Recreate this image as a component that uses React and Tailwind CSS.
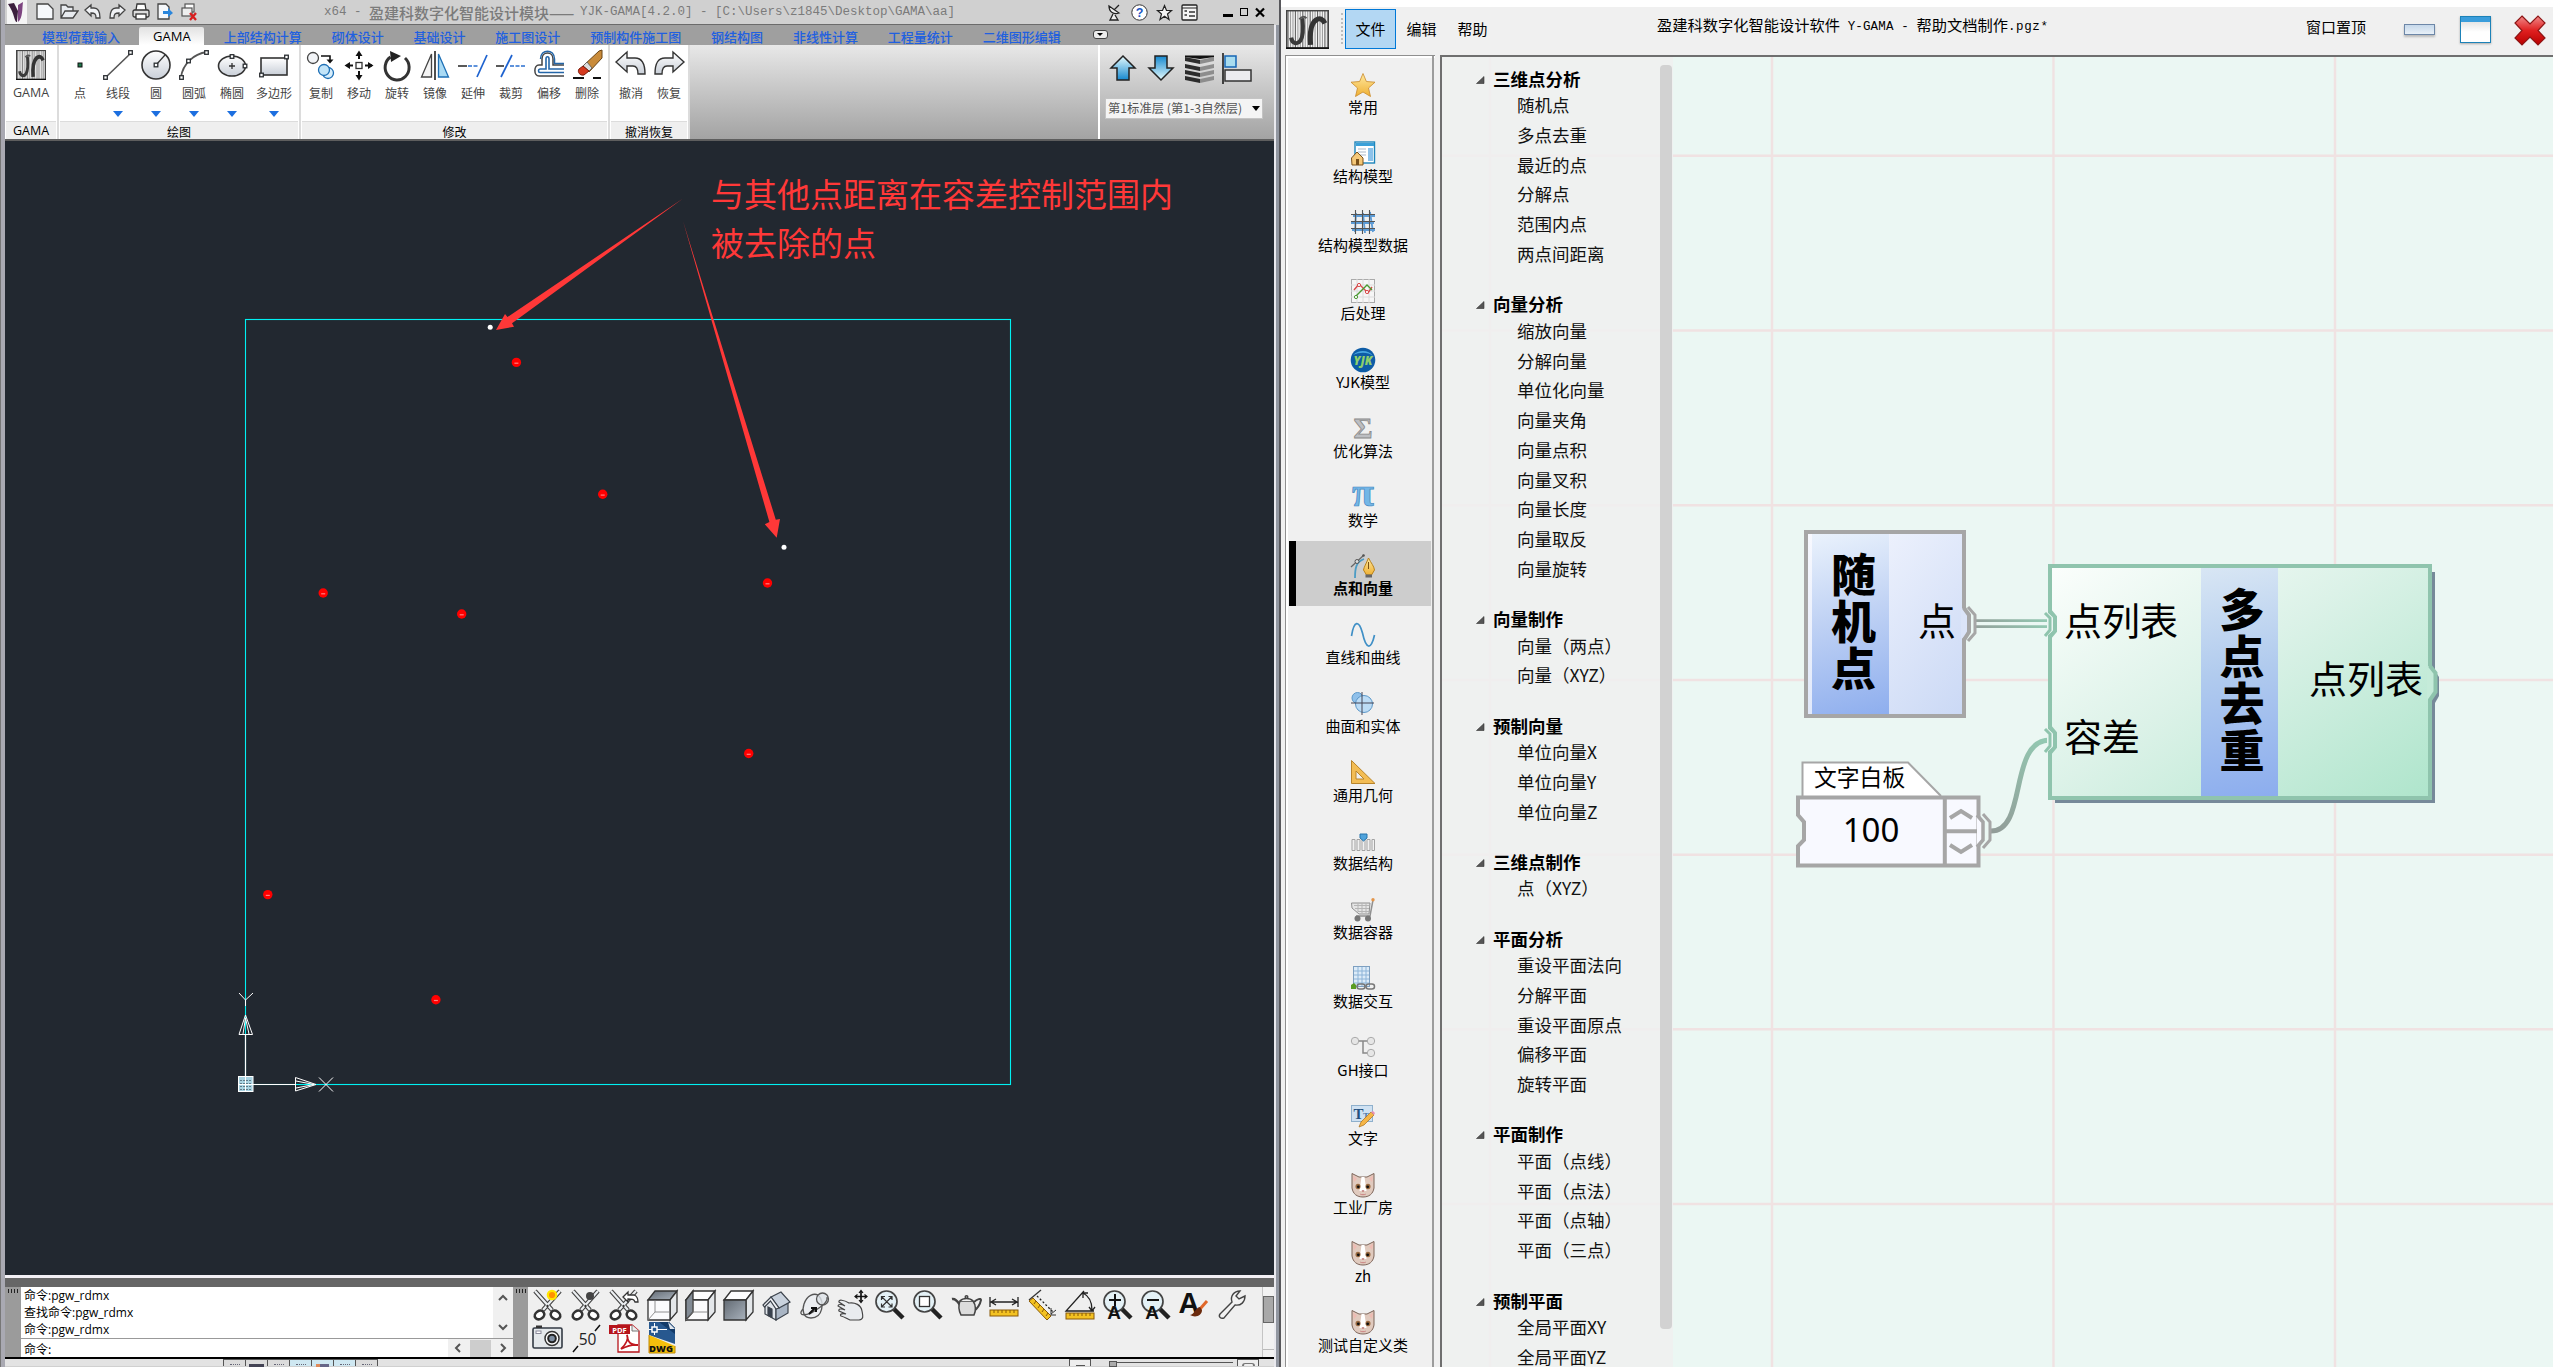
import React from "react";

const Svg = ({ w = 30, h = 30, vb = "0 0 30 30", className = "", children }) => (
  <svg width={w} height={h} viewBox={vb} fill="none" className={"block shrink-0 overflow-visible " + className}>
    {children}
  </svg>
);

const ink = "#2b2f33";

/* ---------- shared gradients ---------- */
const Defs = () => (
  <svg width="0" height="0" className="absolute">
    <defs>
      <linearGradient id="gSilver" x1="0" y1="0" x2="0" y2="1">
        <stop offset="0" stopColor="#ffffff" />
        <stop offset="1" stopColor="#c9cfd8" />
      </linearGradient>
      <linearGradient id="gBlueUp" x1="0" y1="0" x2="0" y2="1">
        <stop offset="0" stopColor="#e6fbfd" />
        <stop offset="1" stopColor="#1488cf" />
      </linearGradient>
      <linearGradient id="gBlueDown" x1="0" y1="0" x2="0" y2="1">
        <stop offset="0" stopColor="#1488cf" />
        <stop offset="1" stopColor="#e6fbfd" />
      </linearGradient>
      <linearGradient id="gGold" x1="0" y1="0" x2="0" y2="1">
        <stop offset="0" stopColor="#ffe9a0" />
        <stop offset="1" stopColor="#efb033" />
      </linearGradient>
      <linearGradient id="gRed" x1="0" y1="0" x2="0" y2="1">
        <stop offset="0" stopColor="#f08a8a" />
        <stop offset="0.5" stopColor="#e02020" />
        <stop offset="1" stopColor="#b80000" />
      </linearGradient>
      <linearGradient id="gSteel" x1="0" y1="0" x2="1" y2="1">
        <stop offset="0" stopColor="#636b74" />
        <stop offset="1" stopColor="#a9b2bc" />
      </linearGradient>
    </defs>
  </svg>
);

const Logo = ({ w = 30, h = 30 }) => (
  <svg width={w} height={h} viewBox="0 0 42 38" preserveAspectRatio="none" className="block">
    <rect width="42" height="38" fill="#f4f4f4" />
    {Array.from({ length: 17 }, (_, i) => (
      <line key={i} x1={2 + i * 2.4} x2={2 + i * 2.4} y1="1" y2="37" stroke={i % 3 ? "#a0a0a0" : "#666"} strokeWidth="1.1" />
    ))}
    <path d="M16 8C17 18 17 26 14 30C11 34 6 33 5 27" stroke="#3a3a3a" strokeWidth="4" fill="none" />
    <path d="M24 34C23 22 24 14 29 10C33 7 36 9 38 13" stroke="#333" strokeWidth="5" fill="none" />
    <path d="M13 9C16 6 18 6 20 8" stroke="#555" strokeWidth="2" fill="none" />
    <rect x="0.7" y="0.7" width="40.6" height="36.6" stroke="#444" strokeWidth="1.4" fill="none" />
    <path d="M0 37.2H42" stroke="#111" strokeWidth="1.6" />
  </svg>
);

/* ---------- ribbon icons ---------- */
const sq = (x, y) => <rect x={x - 1.8} y={y - 1.8} width="3.6" height="3.6" fill="#fff" stroke={ink} strokeWidth="1.3" />;

const ribbonIcons = {
  点: <rect x="13" y="13" width="4" height="4" fill="#1f7a4c" stroke="#111" />,
  线段: (<><path d="M2 28L28 3" stroke="#555" strokeWidth="1.6" />{sq(2.5, 27.5)}{sq(27.5, 2.5)}</>),
  圆: (<><circle cx="15" cy="15" r="14" fill="url(#gSilver)" stroke="#333" strokeWidth="1.6" /><path d="M15 15L24 5" stroke="#333" strokeWidth="1.2" />{sq(15, 15)}</>),
  圆弧: (<><path d="M2 27C4 14 14 4 28 2" stroke="#555" strokeWidth="1.8" />{sq(2.5, 27.5)}{sq(9.5, 11)}{sq(27.5, 2.5)}</>),
  椭圆: (<><ellipse cx="15" cy="16" rx="13.5" ry="10" fill="url(#gSilver)" stroke="#333" strokeWidth="1.6" /><path d="M15 13V19M12 16H18" stroke="#333" strokeWidth="1.3" />{sq(15, 6.5)}{sq(28, 16)}</>),
  多边形: (<><rect x="2" y="8" width="26" height="17" fill="url(#gSilver)" stroke="#333" strokeWidth="1.6" />{sq(2.5, 25)}{sq(27.5, 7)}</>),
  复制: (<><circle cx="7" cy="8" r="5.5" fill="#f2f4f7" stroke="#444" strokeWidth="1.3" /><path d="M15 6H24V11" stroke="#111" strokeWidth="1.6" /><path d="M20.5 9.5H27.5L24 13.5Z" fill="#111" /><circle cx="22" cy="23" r="5.5" fill="#d8eefb" stroke="#1d6fb5" strokeWidth="1.3" /><circle cx="18" cy="20" r="5.5" fill="#c2e4f8" stroke="#1d6fb5" strokeWidth="1.3" /></>),
  移动: (<><rect x="12" y="12.5" width="6" height="6" fill="#fff" stroke="#333" strokeWidth="1.3" /><path d="M15 3V9M15 21V28M3 15.5H9M21 15.5H28" stroke="#111" strokeWidth="2" /><path d="M11.5 6L15 0.500L18.500 6ZM11.500 25L15 30.500L18.500 25ZM6 12L0.500 15.500L6 19ZM24 12L29.500 15.500L24 19Z" fill="#111" /></>),
  旋转: (<><path d="M8.500 7A12 12.500 0 1 0 23 8" stroke="#333" strokeWidth="3" /><path d="M8 1L19 6L9 12Z" fill="#222" /></>),
  镜像: (<><path d="M15 1V30" stroke="#222" strokeWidth="1.6" /><path d="M11.500 4V27H1.500Z" fill="#f4f4f4" stroke="#444" strokeWidth="1.300" /><path d="M18.500 4V27H28.500Z" fill="#a9daf4" stroke="#1d6fb5" strokeWidth="1.300" /></>),
  延伸: (<><path d="M0 16H9" stroke="#222" strokeWidth="1.500" /><path d="M10 16H21" stroke="#2a6fd0" strokeWidth="1.500" strokeDasharray="4 1.500" /><path d="M29 5L19 27" stroke="#1d62cf" strokeWidth="1.700" /></>),
  裁剪: (<><path d="M0 16H8" stroke="#222" strokeWidth="1.500" /><path d="M14 16H30" stroke="#2a6fd0" strokeWidth="1.500" strokeDasharray="4 1.500" /><path d="M16 5L5 27" stroke="#1d62cf" strokeWidth="1.700" /></>),
  偏移: (<><path d="M30 15H19V9C19 1 8 1 8 9V15H5C-0.500 15 -0.500 26 5 26H30" stroke="#444" strokeWidth="1.500" /><path d="M30 13.500H20.500V9C20.500 -1.500 6.500 -1.500 6.500 9" stroke="#2466a8" strokeWidth="1.500" /><path d="M30 19H15V9C15 6 12 6 12 9V19H6C4 19 4 22.500 6 22.500H30" stroke="#2466a8" strokeWidth="1.600" /></>),
  删除: (<><path d="M1 28H12M21 28H29" stroke="#111" strokeWidth="2" /><path d="M30 0V8L17 22L11 16L27 1Z" fill="#c98b3a" stroke="#6a4415" /><path d="M15 12L20 18L17 21L11 16Z" fill="#ddd" stroke="#555" strokeWidth=".8" /><path d="M11 16L17 21L12 25C8 26 5 22 7 19Z" fill="#d63a1f" stroke="#7b1c0c" /></>),
  撤消: <path d="M0 12L11 2V8H19C26 8 29 13 29 24H22C22 18 20 16 17 16H11V22Z" fill="url(#gSilver)" stroke="#333" strokeWidth="1.400" />,
  恢复: <path d="M30 12L19 2V8H11C4 8 1 13 1 24H8C8 18 10 16 13 16H19V22Z" fill="url(#gSilver)" stroke="#333" strokeWidth="1.400" />,
};

const Tool = ({ name, w = "w-[38px]", menu }) => (
  <div className={"flex h-[76px] flex-col items-center pt-[4px] " + w}>
    <Svg className="translate-y-px">{ribbonIcons[name]}</Svg>
    <span className="mt-[4px] h-[18px] whitespace-nowrap text-[12px] leading-[19px] text-[#444]">{name}</span>
    {menu && <span className="mt-[10px] h-0 w-0 border-x-[5px] border-t-[6px] border-x-transparent border-t-[#1c6fe0]" />}
  </div>
);

const Group = ({ label, className, children }) => (
  <div className={"flex flex-col border-r-2 border-[#dcdcdc] bg-white " + className}>
    <div className="flex h-[76px]">{children}</div>
    <div className="mx-[1px] flex h-[18px] items-center justify-center border-t border-[#dcdcdc] bg-[#efefef] pt-[2px] text-[12px] leading-none text-black">{label}</div>
  </div>
);

const Mono = ({ children }) => <span className="whitespace-pre font-['Liberation_Mono',monospace] text-[12.5px]">{children}</span>;

const QuickIcons = () => (
  <div className="flex items-center pl-[2px]">
    <svg width="20" height="24" viewBox="0 0 20 24" className="mr-[8px]">
      <rect width="20" height="24" fill="#f5f5f5" />
      <path d="M1 4L7 3L11 11L10 22C7 22 8 14 1 4Z" fill="#3b1f3d" />
      <path d="M11 5L16 2C15 8 16 18 11 22Z" fill="#7d4480" />
    </svg>
    {[
      <path key="a" d="M2 2H13L18 7V17H2Z" fill="#f6f8fb" stroke="#444" strokeWidth="1.300" />,
      <path key="b" d="M2 16V3H7L9 5H14V9H19L14 16ZM2 16L6 9H14" fill="#e8ebef" stroke="#444" strokeWidth="1.300" />,
      <path key="c" d="M2 8L8 3V6H11C15 6 17 9 17 16H13C13 12 12 11 8 11V14Z" fill="#f0f2f5" stroke="#444" strokeWidth="1.300" />,
      <path key="d" d="M18 8L12 3V6H9C5 6 3 9 3 16H7C7 12 8 11 12 11V14Z" fill="#f0f2f5" stroke="#444" strokeWidth="1.300" />,
      <g key="e" stroke="#333" strokeWidth="1.300"><path d="M5 8L6 2H14L15 8" fill="#fff" /><rect x="2" y="8" width="16" height="7" rx="1.500" fill="#ddd" /><rect x="5" y="12" width="10" height="5" fill="#fff" /></g>,
      <g key="f"><path d="M3 2H11L14 5V17H3Z" fill="#f6f8fb" stroke="#444" strokeWidth="1.300" /><path d="M8 9H13V6L18 11L13 15V12H8Z" fill="#2a86dc" /></g>,
      <g key="g" stroke="#555" strokeWidth="1.200"><rect x="6" y="2" width="9" height="8" fill="#fff" /><rect x="3" y="6" width="10" height="8" fill="#eee" /><path d="M11 11L17 18M17 11L11 18" stroke="#d81e1e" strokeWidth="2.300" /></g>,
    ].map((g, i) => (
      <svg key={i} width="20" height="20" viewBox="0 0 20 20" fill="none" className="mr-[4px]">{g}</svg>
    ))}
  </div>
);

const TitleBar = () => (
  <div className="flex h-[25px] items-center border-b border-[#6b6b6b] bg-[#d0d0d0]">
    <div className="w-[319px]"><QuickIcons /></div>
    <div className="flex w-[783px] items-center whitespace-nowrap text-[15px] font-medium leading-none text-[#7b7b7b]">
      <Mono>{"x64 - "}</Mono>盈建科数字化智能设计模块
      <span className="inline-block w-[31px] tracking-[1px]" lang="zh-CN">——</span>
      <Mono>{"YJK-GAMA[4.2.0] - [C:\\Users\\z1845\\Desktop\\GAMA\\aa]"}</Mono>
    </div>
    <div className="flex items-center gap-[8px]">
      <Svg w={16} h={18} vb="0 0 16 18"><path d="M2 3C2 9 7 12 12 10ZM7 7L12 2M6 11L3 17H11L8 12" fill="#eee" stroke="#222" strokeWidth="1.300" /></Svg>
      <Svg w={17} h={17} vb="0 0 17 17"><circle cx="8.500" cy="8.500" r="7.700" fill="#fff" stroke="#333" /><text x="8.500" y="13" textAnchor="middle" fontSize="12.500" fontWeight="700" fill="#1b55c4" fontFamily="Liberation Sans">?</text></Svg>
      <Svg w={17} h={17} vb="0 0 17 17"><path d="M8.500 1.500L10.500 6.500H15.500L11.500 10L13 15.500L8.500 12.300L4 15.500L5.500 10L1.500 6.500H6.500Z" fill="#f4f4f4" stroke="#222" strokeWidth="1.200" /></Svg>
      <Svg w={17} h={17} vb="0 0 17 17"><rect x="1" y="1" width="15" height="15" rx="1" fill="#f4f4f4" stroke="#222" strokeWidth="1.300" /><path d="M1 4H16" stroke="#222" /><path d="M3.500 7H6M3.500 11H6M8 8H14M8 12H14" stroke="#333" strokeWidth="1.300" /></Svg>
    </div>
    <div className="ml-[25px] flex items-center gap-[7px]">
      <span className="mt-[6px] h-[3px] w-[10px] bg-black" />
      <span className="h-[8px] w-[8px] border-[1.5px] border-black" />
      <Svg w={10} h={9} vb="0 0 10 9"><path d="M1 0.500L9 8.500M9 0.500L1 8.500" stroke="#000" strokeWidth="2.200" /></Svg>
    </div>
  </div>
);

const Tab = ({ children }) => (
  <div className="translate-y-px whitespace-nowrap px-[14.93px] text-[13px] font-medium leading-[19px] text-[#2160e0]">{children}</div>
);

const TabBar = () => (
  <div className="flex h-[20px] items-end bg-[#9f9f9f] pl-[22px]">
    <Tab>模型荷载输入</Tab>
    <div className="mx-[4.500px] h-[18px] w-[65px] rounded-t-[2px] bg-gradient-to-b from-[#e2e2e2] to-white text-center font-['Open_Sans'] text-[13px] leading-[18px] text-black">GAMA</div>
    {["上部结构计算", "砌体设计", "基础设计", "施工图设计", "预制构件施工图", "钢结构图", "非线性计算", "工程量统计", "二维图形编辑"].map((t) => <Tab key={t}>{t}</Tab>)}
    <div className="mb-[6px] ml-[17px] flex h-[9px] w-[15px] items-center justify-center rounded-[3px] border border-[#444] bg-[#eee]">
      <span className="h-0 w-0 border-x-[3px] border-t-[3px] border-x-transparent border-t-black" />
    </div>
  </div>
);

const Ribbon = () => (
  <div className="flex h-[94px] bg-[#e6e6e6]">
    <Group label={<span className="font-['Open_Sans'] text-[12.500px]">GAMA</span>} className="w-[54px]">
      <div className="flex w-full flex-col items-center pt-[5px]">
        <Logo w={30} h={30} />
        <span className="mt-[3px] font-['Open_Sans'] text-[12.500px] leading-[19px] text-[#444]">GAMA</span>
      </div>
    </Group>
    <Group label="绘图" className="w-[242px] [&>div:first-child]:pl-[2px]">
      <Tool name="点" />
      <Tool name="线段" menu />
      <Tool name="圆" menu />
      <Tool name="圆弧" menu />
      <Tool name="椭圆" menu />
      <Tool name="多边形" menu w="w-[46px]" />
    </Group>
    <Group label="修改" className="w-[309px] [&>div:first-child]:pl-[1px]">
      {["复制", "移动", "旋转", "镜像", "延伸", "裁剪", "偏移", "删除"].map((n) => <Tool key={n} name={n} />)}
    </Group>
    <Group label="撤消恢复" className="w-[80px] [&>div:first-child]:pl-[2px]">
      <Tool name="撤消" />
      <Tool name="恢复" />
    </Group>
    <div className="flex-1 bg-gradient-to-b from-[#e8e8e8] to-[#a3a3a3]" />
    <div className="w-[176px] border-l-2 border-white bg-gradient-to-b from-[#e8e8e8] to-[#a3a3a3] pl-[5px]">
      <div className="flex h-[53px] items-start pl-[5px] pt-[10px]">
        <Svg w={26} h={26} vb="0 0 26 26" className="mr-[12px]"><path d="M13 1L25 13H19V25H7V13H1Z" fill="url(#gBlueUp)" stroke="#222" strokeWidth="1.500" /></Svg>
        <Svg w={26} h={26} vb="0 0 26 26" className="mr-[10px]"><path d="M13 25L1 13H7V1H19V13H25Z" fill="url(#gBlueDown)" stroke="#222" strokeWidth="1.500" /></Svg>
        <Svg w={31} h={28} vb="0 0 31 28" className="mr-[7px]">
          {[2, 9, 15, 21].map((y) => (<g key={y}><path d={`M1 ${y}L16 ${y + 3}V${y + 7}L1 ${y + 4}Z`} fill="#2c2c2c" /><path d={`M30 ${y}L16 ${y + 3}V${y + 7}L30 ${y + 4}Z`} fill="#8d8d8d" /></g>))}
          <path d="M1 0.500H30V2L16 4L1 2Z" fill="#111" />
        </Svg>
        <Svg w={31} h={31} vb="0 0 31 31" className="-mt-[2px]"><path d="M1 0V31" stroke="#111" strokeWidth="1.500" /><rect x="3" y="3" width="11" height="11" fill="#a9dcef" stroke="#1666b5" strokeWidth="1.500" /><rect x="3" y="17" width="26" height="11" fill="#ececf0" stroke="#333" strokeWidth="1.500" /></Svg>
      </div>
      <div className="flex h-[21px] w-[158px] items-center justify-between border border-[#c4c4c4] bg-[#f4f4f4] pl-[2px] pr-[1px] text-[12.300px] leading-none text-[#555]">
        <span className="whitespace-nowrap">第1标准层 (第1-3自然层)</span>
        <span className="mr-[1px] h-0 w-0 border-x-[4px] border-t-[5px] border-x-transparent border-t-black" />
      </div>
    </div>
  </div>
);

/* ---------- model space ---------- */
const redPoints = [[516.4, 362.4], [602.7, 494.3], [767.500, 583], [461.700, 614], [323.200, 593], [748.700, 753.500], [267.800, 894.600], [435.900, 999.700]];

const ModelSpace = () => (
  <div className="relative h-[1134px] bg-[#222830]">
    <svg width="1269" height="1134" viewBox="5 141 1269 1134" className="block">
      <rect x="245.500" y="319.500" width="765" height="765" fill="none" stroke="#00f0f2" strokeWidth="1.100" />
      <g stroke="#fff" fill="none">
        <path d="M245.500 1006V1000M239 993L245.500 1000L253 993" />
        <path d="M245.500 1035V1084.500H296" strokeWidth="1.200" />
        <path d="M245.500 1015L239 1034.500H252.500ZM243 1034L245.500 1018L249 1034" />
        <path d="M316 1084.500L295.500 1077.500V1091ZM296 1081L314 1084.500L296 1088" />
        <path d="M319 1077.500L333 1091.500M333 1077.500L319 1091.500" />
        <rect x="238.500" y="1076.500" width="14.500" height="15" fill="#a9d3e2" />
      </g>
      {[0, 1, 2, 3].map((r) => [0, 1, 2, 3].map((c) => <rect key={r + "-" + c} x={240.500 + c * 3} y={1080 + r * 3} width="1" height="1" fill="#123" />))}
      <path d="M238 1084.500H253M245.500 1077V1092" stroke="#fff" />
      {redPoints.map(([x, y]) => (
        <g key={x}><circle cx={x} cy={y} r="4.700" fill="#ff0000" /><path d={`M${x - 2} ${y + 0.800}h4`} stroke="#ff8080" strokeWidth="1.200" /></g>
      ))}
      <circle cx="490.200" cy="327.300" r="2.500" fill="#fff" />
      <circle cx="784" cy="547.300" r="2.500" fill="#fff" />
      <path d="M683 198.500L507.500 317L505 314L496 330L514 326.700L512 323.200Z" fill="#ff3838" />
      <path d="M683 221L769.400 522L764.800 524.300L776.700 537.700L780 519L775.800 519.700Z" fill="#ff3838" />
    </svg>
    <div className="absolute left-[706px] top-[27.500px] whitespace-nowrap text-[33px] leading-[49px] text-[#ff3838]">
      与其他点距离在容差控制范围内<br />被去除的点
    </div>
  </div>
);

/* ---------- bottom docks ---------- */
const Scissors = ({ children }) => (
  <><path d="M2 1L19 20M27 1L10 20" stroke="#444" strokeWidth="4.400" /><path d="M2 1L19 20M27 1L10 20" stroke="#eceff2" strokeWidth="2.200" /><ellipse cx="6.500" cy="25" rx="5" ry="4" stroke="#333" strokeWidth="2.600" fill="#fff" transform="rotate(-35 6.500 25)" /><ellipse cx="22.500" cy="25" rx="5" ry="4" stroke="#333" strokeWidth="2.600" fill="#fff" transform="rotate(35 22.500 25)" /><circle cx="14.500" cy="16" r="1.200" fill="#333" />{children}</>
);
const Cube = ({ face }) => (
  <g stroke="#333" strokeWidth="1.300">
    <path d="M1 10L8 1H30L23 10Z" fill={face === "top" ? "url(#gSteel)" : "#fdfdfe"} />
    <path d="M23 10L30 1V22L23 30Z" fill="#e4e7ea" />
    <path d="M1 10H23V30H1Z" fill={face === "front" ? "url(#gSteel)" : "#fbfbfc"} />
    {face === "left" && <path d="M1 10L8 1V22L1 30Z" fill="#828b95" />}
    {face !== "front" && <path d="M8 10V22H23M8 22L1 30" strokeWidth=".8" stroke="#777" />}
  </g>
);
const Lens = ({ children }) => (
  <><path d="M18 18L28 28" stroke="#222" strokeWidth="4.500" /><circle cx="11.500" cy="11.500" r="10.500" fill="#e4f1f6" stroke="#444" strokeWidth="1.700" />{children}</>
);
const Ruler = ({ y = 20 }) => (<><rect x="1" y={y} width="28" height="6" fill="#f3c222" stroke="#8a5b08" /><path d={`M5 ${y}v3M9 ${y}v3M13 ${y}v3M17 ${y}v3M21 ${y}v3M25 ${y}v3`} stroke="#8a5b08" /></>);

const viewIcons = [
  <Scissors><circle cx="19" cy="5" r="4.200" fill="#ff9100" stroke="#ffe600" strokeWidth="2.200" /></Scissors>,
  <Scissors><circle cx="19" cy="6" r="4" fill="#444" /></Scissors>,
  <Scissors><path d="M14 7L19 2V5H25C28 6 29 8 29 12H26C25 9 23 9 19 9V12Z" fill="#fff" stroke="#333" strokeWidth="1.300" /></Scissors>,
  <Cube face="top" />, <Cube face="left" />, <Cube face="front" />,
  <g stroke="#3c434c" strokeWidth="1.200"><path d="M4 13V24L15 30V18L10 10Z" fill="#dfe4ea" /><path d="M15 18V30L27 23V13Z" fill="#a9b5c4" /><path d="M10 7L20 2L29 12L18 18Z" fill="#c9d2dd" /><path d="M2 15L10 7L18 18L15 19L9.500 11L3.500 17Z" fill="#f2f4f7" /><path d="M7 17L11 19V27.500L7 25.500Z" fill="#39424f" /></g>,
  <g stroke="#555" strokeWidth="1.300"><path d="M12 28C4 28 3 20 5 14C8 5 15 3 19 5C26 12 24 28 12 28Z" fill="#eceef1" /><circle cx="23.500" cy="9" r="6" fill="#dfe3e8" fillOpacity=".8" /><path d="M4 19C-3 27 9 26 17 20C25 15 29 10 28 7" /><path d="M10 24L16 18M12 18H17V22" stroke="#111" strokeWidth="2" /></g>,
  <g stroke="#444" strokeWidth="1.200"><path d="M2 12C1 9 7 10 12 13C18 12 24 15 25 21C26 26 27 29 22 30H13C10 29 8 27 4 26C2 24 6 23 9 24L2 21C1 19 4 18 8 20L1 16C1 14 4 14 8 16Z" fill="#e9ecef" /><path d="M24 1V12M18.500 6.500H29.500" stroke="#111" strokeWidth="1.700" /><path d="M22 3L24 0.500L26 3M22 10L24 12.500L26 10M20.500 4.500L18 6.500L20.500 8.500M27.500 4.500L30 6.500L27.500 8.500" stroke="#111" /></g>,
  <Lens><path d="M7 7L16.500 16.500M16.500 7L7 16.500M6.500 10V6.500H10M13.500 6.500H17V10M17 13.500V17H13.500M10 17H6.500V13.500" stroke="#333" strokeWidth="1.200" /></Lens>,
  <Lens><rect x="6.500" y="6.500" width="10" height="10" fill="#fff" stroke="#333" strokeWidth="1.300" /></Lens>,
  <g stroke="#444" strokeWidth="1.500"><path d="M23 12C26 9 30 8 30 10C29 15 26 19 22 22" strokeWidth="2" /><path d="M1 9C5 8 7 12 9 15L10 21" strokeWidth="2.500" /><path d="M9 11C7 16 8 21 10 25H23C25 21 25 15 22 11Z" fill="#dcdcdc" /><path d="M9 11C12 7.500 19 7.500 22 11" fill="#f2f2f2" /><circle cx="15.500" cy="7" r="1.300" /></g>,
  <><path d="M1 7V17M29 7V17M3 12H27M7 9L2 12L7 15M23 9L28 12L23 15" stroke="#222" strokeWidth="1.300" /><Ruler y={20} /></>,
  <><path d="M2 10L14 0" stroke="#333" strokeWidth="1.300" /><path d="M10 6L26 22" stroke="#222" strokeWidth="1.300" strokeDasharray="2 2" /><path d="M24 24L29 20M24 18V25H29" stroke="#333" /><path d="M2 11L6 8L24 26L20 30Z" fill="#f3c222" stroke="#8a5b08" /><path d="M9 11l-2 3M13 15l-2 3M17 19l-2 3M21 23l-2 3" stroke="#8a5b08" /></>,
  <><path d="M19 1L1 21H29M18 3C24 6 27 13 27 20M18 8V3H23M24 17L27 21L30 17" stroke="#222" strokeWidth="1.300" /><Ruler y={23} /></>,
  <Lens><path d="M6 10H18M12 4V16" stroke="#111" strokeWidth="2" /><text x="11" y="29" textAnchor="middle" fontSize="19" fontWeight="700" fill="#111" fontFamily="Liberation Sans">A</text></Lens>,
  <Lens><path d="M6 10H18" stroke="#111" strokeWidth="2" /><text x="11" y="29" textAnchor="middle" fontSize="19" fontWeight="700" fill="#111" fontFamily="Liberation Sans">A</text></Lens>,
  <><text x="10" y="22.500" textAnchor="middle" fontSize="29" fontWeight="700" fill="#111" fontFamily="Liberation Sans">A</text><path d="M28 11L21 19" stroke="#e0672a" strokeWidth="3" /><path d="M21 17C16 18 16 24 11 25C16 28 23 26 23 20Z" fill="#6b2a0d" /></>,
  <path d="M3 24L15 12C13 6 17 1 23 1L19 6L22 9L28 6C28 12 24 16 18 15L7 28C4 29 1 27 3 24Z" fill="#f2f2f2" stroke="#444" strokeWidth="1.400" />,
];

const Grip = ({ className }) => (
  <div className={"bg-[#9b9b9b] pt-[2px] " + className}>
    <div className="mx-auto h-[4px] w-[12px] bg-[radial-gradient(#222_0.8px,transparent_0.9px)] [background-size:3px_2px]" />
  </div>
);

const Chev = ({ d }) => <svg width="10" height="10" viewBox="0 0 10 10" fill="none"><path d={d} stroke="#555" strokeWidth="2" /></svg>;

const BottomDock = () => (
  <div className="flex h-[70px]">
    <Grip className="w-[16px]" />
    <div className="flex w-[492px] flex-col bg-white text-black">
      <div className="flex h-[52px] border-b border-[#999]">
        <div className="flex-1 pl-[3px] font-['Open_Sans','Noto_Sans_CJK_SC',sans-serif] text-[12px] leading-[17px]">
          <p>命令:pgw_rdmx</p><p>查找命令:pgw_rdmx</p><p>命令:pgw_rdmx</p>
        </div>
        <div className="flex w-[20px] flex-col items-center justify-between bg-[#f0f0f0] py-[6px]">
          <Chev d="M1 7L5 3L9 7" /><Chev d="M1 3L5 7L9 3" />
        </div>
      </div>
      <div className="flex h-[18px] items-center">
        <div className="flex-1 pl-[3px] text-[12px] leading-[17px]">命令:</div>
        <div className="flex h-full w-[65px] items-center justify-between bg-[#f0f0f0] px-[5px]">
          <Chev d="M7 1L3 5L7 9" /><span className="h-[17px] w-[21px] bg-[#cdcdcd]" /><Chev d="M3 1L7 5L3 9" />
        </div>
      </div>
    </div>
    <Grip className="w-[15px]" />
    <div className="flex flex-1 flex-col bg-[#efefef] pl-[5px]">
      <div className="flex gap-[8px] pt-[3px]">
        {viewIcons.map((g, i) => <Svg key={i} h={31} vb="0 0 30 31">{g}</Svg>)}
      </div>
      <div className="flex gap-[8px] pt-[4px]">
        <Svg h={29} vb="0 0 30 29"><rect x="0" y="3" width="29" height="20" rx="1.500" fill="#e4e8eb" stroke="#333a44" strokeWidth="1.600" /><rect x="3" y="0.500" width="6" height="2.500" fill="#333" /><rect x="3" y="6" width="5" height="2.500" fill="#fff" stroke="#889" /><circle cx="19" cy="13.500" r="7" fill="#fff" stroke="#333" strokeWidth="1.500" /><circle cx="19" cy="13.500" r="3.800" fill="#7e8fa3" stroke="#222" strokeWidth="2" /></Svg>
        <Svg h={29} vb="0 0 30 29"><path d="M24 6L29 0M2 27L7 21" stroke="#111" strokeWidth="1.500" /><text x="16.500" y="20" textAnchor="middle" fontSize="15.500" fill="#222" fontFamily="Open Sans">50</text></Svg>
        <Svg h={29} vb="0 0 30 29"><path d="M9 0H23L30 6V27H9Z" fill="#fff" stroke="#b6141b" strokeWidth="1.300" /><path d="M12 24C18 18 20 14 18 10C19 18 22 20 29 20C22 19 16 22 12 24Z" stroke="#c01820" strokeWidth="1.800" /><path d="M23 0V6H30" fill="#eee" stroke="#777" /><rect y="0" width="21" height="9" fill="#b6141b" /><text x="10.500" y="7.500" textAnchor="middle" fontSize="7.500" fontWeight="700" fill="#fff" fontFamily="Open Sans">PDF</text></Svg>
        <Svg h={31} vb="0 0 30 31" className="-translate-y-[3px]"><path d="M2 0H22L28 6V22L2 13Z" fill="#27588f" /><path d="M12 0H22L28 6V12Z" fill="#123a68" /><path d="M21 0L28 7H23Z" fill="#dfe6ee" /><path d="M2 13L28 24V31H2Z" fill="#f5bf0c" /><rect x="5" y="5" width="5" height="5" stroke="#fff" strokeWidth="1.500" /><path d="M2 7.500H5M10 7.500H20M7.500 10V13M7.500 1V5" stroke="#fff" /><path d="M2 13V31H28V24" stroke="#c08a00" /><text x="14" y="29.500" textAnchor="middle" fontSize="9.500" fontWeight="800" fill="#111" fontFamily="Open Sans">DWG</text></Svg>
      </div>
    </div>
    <div className="w-[12px] border-l border-[#c4c4c4] bg-[#f2f2f2]">
      <div className="mt-[9px] h-[27px] border border-[#666] bg-[#a8a8a8]" />
      <div className="mt-[26px] h-px bg-[#bbb]" />
    </div>
  </div>
);

const StatusBar = () => (
  <div className="flex h-[9px] items-end border-t-2 border-black bg-[#e3e3e3]">
    <div className="ml-[218px] flex h-[7px] border-l border-[#555]">
      {["bg-[#dcdcdc]", "bg-[#dcdcdc]", "bg-[#dcdcdc]", "bg-[#cfe8f2]", "bg-[#cfe8f2]", "bg-[#cfe8f2]", "bg-[#dcdcdc]"].map((c, i) => (
        <div key={i} className={"flex h-[7px] w-[22px] justify-center border-r border-t border-[#555] pt-[4px] " + c}>
          <span className={i === 1 ? "h-[3px] w-[15px] bg-[#445]" : i === 4 ? "h-[3px] w-[13px] border-l-4 border-[#e08a5a] bg-[#668]" : "h-[1px] w-[10px] border-b border-dotted border-[#667]"} />
        </div>
      ))}
    </div>
    <div className="ml-[691px] flex h-[7px] w-[22px] items-end justify-center border border-b-0 border-[#555] bg-[#eee]"><span className="h-px w-[9px] bg-[#555]" /></div>
    <div className="ml-[18px] flex h-[4px] w-[124px] border-t border-[#555]"><span className="-mt-[2px] h-[6px] w-[8px] border border-[#555] bg-[#aaa]" /></div>
    <div className="ml-[4px] flex h-[7px] w-[22px] items-end justify-center border border-b-0 border-[#555] bg-[#eee]"><span className="h-[3px] w-[13px] rounded-t border-x-2 border-t border-[#777]" /></div>
  </div>
);

const CadWindow = () => (
  <div className="flex h-[1367px] w-[1281px] bg-[#d0d0d0]">
    <div className="w-[5px] border-l border-[#777] bg-[#a9a9b2]" />
    <div className="w-[1269px]">
      <TitleBar />
      <TabBar />
      <Ribbon />
      <div className="h-[2px] bg-[#5e5e5e]" />
      <ModelSpace />
      <div className="h-[3px] bg-[#f3f0f5]" />
      <div className="h-[9px] bg-[#666]" />
      <BottomDock />
      <StatusBar />
    </div>
    <div className="mt-[25px] w-[2px] bg-[#e9e9ee]" />
    <div className="mt-[25px] w-[3px] bg-[#9297a1]" />
    <div className="w-[2px] bg-[#57575b]" />
  </div>
);

/* ---------- category sidebar ---------- */
const cat = (
  <>
    <path d="M1 0.500L8 4H16L23 0.500V15C22 21 18 24 12 24C6 24 2 21 1 15Z" fill="#e0cabe" stroke="#7d6459" strokeWidth="1" />
    <path d="M10.500 4H13.500L15.500 18H8.500Z" fill="#fff" /><ellipse cx="7" cy="13.500" rx="2.500" ry="2.800" fill="#9a6a40" /><ellipse cx="17" cy="13.500" rx="2.500" ry="2.800" fill="#9a6a40" /><circle cx="7.300" cy="13.800" r="1.400" fill="#111" /><circle cx="16.700" cy="13.800" r="1.400" fill="#111" /><path d="M11 17.500H13L12 19ZM9 21C11 22 13 22 15 21" fill="#d88" stroke="#b77" strokeWidth=".6" />
    <path d="M2 2.500L6 5.500L3 9ZM22 2.500L18 5.500L21 9Z" fill="#eebbb3" />
  </>
);
const categories = [
  ["常用", <path d="M12 0.500L15.400 8.500L24 9.200L17.500 15L19.500 23.500L12 19L4.500 23.500L6.500 15L0 9.200L8.600 8.500Z" fill="url(#gGold)" stroke="#c9892a" strokeWidth=".8" />],
  ["结构模型", <><rect x="4" y="1" width="19.500" height="21" fill="#fff" stroke="#1d85bb" strokeWidth="1.400" /><rect x="5" y="2" width="18" height="3" fill="#3aa0d8" /><path d="M7 8H15M7 11H15M7 14H15" stroke="#a9b8c8" /><rect x="17" y="7" width="5" height="13" fill="#8cc2ea" /><path d="M0.500 17L6 11L12 17V24H1Z" fill="#f5c878" stroke="#7a5018" /><rect x="5" y="18" width="3" height="6" fill="#7a5018" /></>],
  ["结构模型数据", <><path d="M2 6H24M0 13H23M1 20H24M5 3L4 22M12 3L14 23M19 2L22 22" stroke="#5d9cd6" strokeWidth="1.800" /><path d="M0 4.500H24M0 11.500H24M0 18.500H24M4.500 0V24M11.500 0V24M18.500 0V24" stroke="#555" strokeWidth="1.100" /></>],
  ["后处理", <><rect x=".5" y=".5" width="23" height="23" fill="#f6f6f6" stroke="#aaa" /><path d="M0 6H24M0 12H24M0 18H24M6 0V24M12 0V24M18 0V24" stroke="#dcdcdc" /><path d="M3 11L8 5L17 14L21 8" stroke="#d84a4a" strokeWidth="1.400" /><path d="M4 18L12 10L16 6L21 11" stroke="#4a9a30" strokeWidth="1.400" /><circle cx="8" cy="6" r="1.600" fill="#fff" stroke="#d84a4a" /><circle cx="5" cy="18" r="1.600" fill="#fff" stroke="#4a9a30" /><circle cx="16" cy="13" r="1.600" fill="#fff" stroke="#d84a4a" /></>],
  ["YJK模型", <><circle cx="12" cy="12" r="12.300" fill="#0d5ca6" /><path d="M2 7C8 1 18 2 22 8C17 4 9 4 2 7Z" fill="#48a7e2" /><text x="12" y="16.500" textAnchor="middle" fontSize="11.500" fontWeight="800" fontStyle="italic" fill="#8ed06b" fontFamily="Open Sans">YJK</text></>],
  ["优化算法", <text x="12" y="22" textAnchor="middle" fontSize="29" fontWeight="700" fill="#bcbec2" stroke="#888" strokeWidth=".8" fontFamily="Liberation Serif">Σ</text>],
  ["数学", <text x="12" y="21" textAnchor="middle" fontSize="40" fontWeight="700" fill="#74b6e6" stroke="#3f86bf" strokeWidth=".7" fontFamily="Liberation Serif">π</text>],
  ["点和向量", <><path d="M4 24C4 14 5 8 13 5" stroke="#4c9cc4" strokeWidth="1.800" /><path d="M0 13L13 1" stroke="#666" strokeWidth="1.200" /><circle cx="6" cy="7.500" r="2" fill="#ddd" stroke="#555" /><circle cx="12.500" cy="1.500" r="1.300" fill="#555" /><path d="M17.500 4C15 10 13 13 12.500 16L15.500 21H20.500L23.500 16C23 12 20 9 17.500 4Z" fill="url(#gGold)" stroke="#b98218" /><path d="M17.500 8V15" stroke="#7a5010" /><rect x="14.500" y="20.500" width="6.500" height="3" fill="#666" /></>],
  ["直线和曲线", <path d="M0.500 13C3 -3 8 -3 11.500 10C15 26 20 28 23.500 12" stroke="#3f8fc6" strokeWidth="1.700" />],
  ["曲面和实体", <><circle cx="6.500" cy="7" r="5.500" fill="#8fc0ea" stroke="#5b97c8" /><circle cx="13" cy="13" r="8.500" fill="#bcdcf6" stroke="#5b97c8" /><path d="M11 1V24M0 12H23" stroke="#445" strokeWidth="1" /></>],
  ["通用几何", <path fillRule="evenodd" d="M0.500 0.500L24 23.500H0.500ZM5 11V19H13Z" fill="#f3bd55" stroke="#b8842a" />],
  ["数据结构", <><path d="M1 10.500H4V21.500H1ZM6 10.500H9V21.500H6ZM11 10.500H14V21.500H11ZM16 10.500H19V21.500H16ZM21 10.500H23.500V21.500H21Z" fill="#f1f1f1" stroke="#a3a3a3" /><path d="M9 5H16V9L12.500 12L9 9Z" fill="#4fa3dc" stroke="#2675ac" /></>],
  ["数据容器", <><path d="M0.500 5H19L18 16H8L1 10Z" fill="#e5e5e5" stroke="#909090" /><path d="M3 7.500H18M4 10.500H18M7 13.500H18M7 5V14M11 5V15M15 5V15" stroke="#b5b5b5" /><path d="M22 2L19 18H5" stroke="#909090" strokeWidth="1.500" /><circle cx="22" cy="1.800" r="1.700" fill="#e3954a" /><circle cx="6.500" cy="20.500" r="3" fill="#777" /><circle cx="17" cy="20.500" r="3" fill="#777" /></>],
  ["数据交互", <><rect x="2.500" y=".5" width="16" height="20" fill="#dcebf8" stroke="#7d9fc0" /><path d="M3 5H18M3 9H18M3 13H18M3 17H18M7 1V20M11 1V20M15 1V20" stroke="#8db4d8" /><path d="M0 23V19L3 17L5 19V23Z" fill="#5a9c22" /><rect x="6" y="18" width="8" height="5" rx="2.500" stroke="#777" strokeWidth="1.500" /><rect x="15" y="18" width="8.500" height="5" rx="2.500" stroke="#777" strokeWidth="1.500" /></>],
  ["GH接口", <><path d="M5 6H20M12 6V18H20" stroke="#888" strokeWidth="1.500" /><circle cx="4" cy="6" r="3.700" fill="#e6e6e6" stroke="#aaa" /><circle cx="20" cy="6" r="3.700" fill="#e6e6e6" stroke="#aaa" /><circle cx="20" cy="18" r="3.700" fill="#e6e6e6" stroke="#aaa" /></>],
  ["文字", <><rect x=".5" y="1.500" width="21" height="16" fill="#cfe1f2" stroke="#8fb0cc" /><text x="7.500" y="15" textAnchor="middle" fontSize="15" fontWeight="700" fill="#24507e" fontFamily="Liberation Serif">T</text><text x="15" y="15" textAnchor="middle" fontSize="9" fontWeight="700" fill="#4a78a8" fontFamily="Liberation Serif">T</text><path d="M8 23L10 18L20 8L23 11L13 21Z" fill="#f5b547" stroke="#a86f18" strokeWidth=".7" /><path d="M20 8L23 11L24 9L22 7Z" fill="#e98fb4" /></>],
  ["工业厂房", cat], ["zh", cat], ["测试自定义类", cat],
];

const Sidebar = () => (
  <div className="h-[1312px] w-[150px] overflow-hidden border-l border-t border-[#8f8f8f] shadow-[inset_2px_2px_0_#fff]">
    <div className="mr-[1px] h-full border-r-2 border-[#9c9c9c] pl-[3px] pt-[4px]">
      {categories.map(([name, icon]) => {
        const on = name === "点和向量";
        return (
          <div key={name} className={"mb-[3.750px] mr-[1px] flex h-[65px] flex-col items-center pt-[12.500px] " + (on ? "bg-[#cdcdcd] shadow-[inset_7px_0_0_#000]" : "")}>
            <Svg w={24} h={24} vb="0 0 24 24" className="ml-[6px]">{icon}</Svg>
            <span className={"ml-[6px] mt-[0.500px] h-[20px] whitespace-nowrap text-[15px] leading-[20px] text-black " + (on ? "font-bold" : "")}>{name}</span>
          </div>
        );
      })}
    </div>
  </div>
);

/* ---------- component tree ---------- */
const tree = [
  ["三维点分析", ["随机点", "多点去重", "最近的点", "分解点", "范围内点", "两点间距离"]],
  ["向量分析", ["缩放向量", "分解向量", "单位化向量", "向量夹角", "向量点积", "向量叉积", "向量长度", "向量取反", "向量旋转"]],
  ["向量制作", ["向量（两点）", "向量（XYZ）"]],
  ["预制向量", ["单位向量X", "单位向量Y", "单位向量Z"]],
  ["三维点制作", ["点（XYZ）"]],
  ["平面分析", ["重设平面法向", "分解平面", "重设平面原点", "偏移平面", "旋转平面"]],
  ["平面制作", ["平面（点线）", "平面（点法）", "平面（点轴）", "平面（三点）"]],
  ["预制平面", ["全局平面XY", "全局平面YZ"]],
];

const TreePanel = () => (
  <div className="absolute left-0 top-0 flex h-[1310px] w-[231px] overflow-hidden bg-[#f0f0f0]/90">
    <div className="w-[218px] shrink-0 pt-[11.800px]">
      {tree.map(([head, items]) => (
        <div key={head} className="mb-[25.600px]">
          <div className="flex h-[21.450px] items-start pl-[34px]">
            <svg width="9" height="8" viewBox="0 0 9 8" className="mt-[7px]"><path d="M0.500 7.500L8 0.500V7.500Z" fill="#555" stroke="#333" strokeWidth=".6" /></svg>
            <span className="-mt-px ml-[8px] text-[17.500px] font-bold leading-[21px] text-black">{head}</span>
          </div>
          {items.map((t) => (
            <div key={t} className="h-[29.750px] whitespace-nowrap pl-[75px] text-[17.500px] leading-[29px] text-[#111]">{t}</div>
          ))}
        </div>
      ))}
    </div>
    <div className="mt-[8px] h-[1264px] w-[12px] rounded-[4px] bg-[#d2d2d2]" />
  </div>
);

/* ---------- node graph ---------- */
const vLines = [1490, 1772, 2053.500, 2335];
const hLines = [155.700, 330.500, 505.200, 680, 854.700, 1029.200, 1204];
const GREY = "#a6a6a6";
const GREEN = "#8fc4ad";

const Title = ({ text, className }) => (
  <div className={"absolute flex items-center justify-center text-[45px] font-black leading-[48px] tracking-[2px] text-black [writing-mode:vertical-rl] " + className}>
    {text}
  </div>
);

const NodeCanvas = () => (
  <div className="relative h-[1310px] w-[1111px] overflow-hidden bg-[#ebf7f3]">
    <svg width="1111" height="1310" viewBox="1442 57 1111 1310" className="absolute left-0 top-0" fill="none">
      {vLines.map((x) => <path key={x} d={`M${x} 57V1367`} stroke="#f0e2e2" strokeWidth="2.400" />)}
      {hLines.map((y) => <path key={y} d={`M1442 ${y}H2553`} stroke="#f0e2e2" strokeWidth="2.400" />)}
    </svg>

    <div className="absolute left-[362px] top-[473px] h-[188px] w-[162px] border-4 border-[#a6a6a6] bg-gradient-to-br from-[#f8f9ff] to-[#cbd9f5]">
      <div className="absolute left-[4px] top-0 h-[180px] w-[77px] bg-[linear-gradient(165deg,#eaf2fc_0%,#c0d2f4_45%,#8eaeee_100%)]" />
      <Title text="随机点" className="left-[4px] top-0 h-[177px] w-[82px]" />
      <span className="absolute left-[110px] top-[60px] text-[38px] leading-[50px] text-black">点</span>
    </div>

    <div className="absolute left-[613px] top-[515px] h-[231px] w-[380px] bg-[#768999]" />
    <svg width="16" height="42" viewBox="0 0 16 42" className="absolute left-[985px] top-[610px]"><path d="M4 4L8 4L12 10V29L8 36L4 36Z" fill="#768999" /></svg>
    <div className="absolute left-[606px] top-[507px] h-[236px] w-[384px] border-4 border-[#8fc4ad] bg-[linear-gradient(145deg,#fbfefc_0%,#dcf2e8_45%,#afe5cc_100%)]">
      <div className="absolute left-[149px] top-0 h-[228px] w-[77px] bg-[linear-gradient(170deg,#d8e6f4_0%,#b1cbee_45%,#8cadee_100%)]" />
      <Title text="多点去重" className="left-[149px] top-0 h-[226px] w-[81px]" />
      <span className="absolute left-[12px] top-[26px] text-[38px] leading-[50px] text-black">点列表</span>
      <span className="absolute left-[12px] top-[142px] text-[38px] leading-[50px] text-black">容差</span>
      <span className="absolute left-[257px] top-[84px] text-[38px] leading-[50px] text-black">点列表</span>
    </div>

    <svg width="1111" height="1310" viewBox="1442 57 1111 1310" className="absolute left-0 top-0" fill="none">
      <defs>
        <linearGradient id="wire" gradientUnits="userSpaceOnUse" x1="1976" y1="0" x2="2048" y2="0"><stop stopColor="#93a19b" /><stop offset="1" stopColor="#93c9b2" /></linearGradient>
        <linearGradient id="wire2" gradientUnits="userSpaceOnUse" x1="1991" y1="831" x2="2048" y2="740"><stop stopColor="#929c98" /><stop offset="1" stopColor="#93c9b2" /></linearGradient>
      </defs>
      {/* wires */}
      <path d="M1976 620.700H2048M1976 626.700H2048" stroke="url(#wire)" strokeWidth="2.800" />
      <path d="M1991 831C2028 831 2008 740 2050 740" stroke="url(#wire2)" strokeWidth="5" />
      {/* output port of the random-point node */}
      <path d="M1961 607L1969 616V631L1961 640Z" fill="#dbe4f8" />
      <path d="M1964 608L1969 615V632L1964 640" stroke={GREY} strokeWidth="4" />
      <path d="M1968 607L1975 615V633L1968 641" stroke={GREY} strokeWidth="3" />
      {/* input ports */}
      {[624, 740].map((y) => (
        <g key={y}>
          <path d={`M2047 ${y - 12}L2054 ${y - 6}V${y + 6}L2047 ${y + 12}Z`} fill="#eaf6f2" />
          <path d={`M2050 ${y - 13}L2055 ${y - 7}V${y + 7}L2050 ${y + 13}`} stroke={GREEN} strokeWidth="4" />
          <path d={`M2045 ${y - 11}L2050 ${y - 6}V${y + 6}L2045 ${y + 12}`} stroke={GREEN} strokeWidth="3" />
        </g>
      ))}
      {/* output port of the dedupe node */}
      <path d="M2427 665L2435 672V694L2427 700Z" fill="#c5ebd9" />
      <path d="M2430 666L2435.500 673V692L2430 700" stroke={GREEN} strokeWidth="4" />
      {/* text board */}
      <path d="M1802.500 797V762.500H1908L1941 796" fill="#fff" stroke={GREY} strokeWidth="2" />
      <path d="M1798 797.500H1978.500V865.500H1798V846L1804 840V822L1798 815Z" fill="#f8f9ff" stroke={GREY} strokeWidth="4" />
      <path d="M1944.800 797V866M1944.800 831.300H1978" stroke={GREY} strokeWidth="4" />
      <path d="M1950 818L1961 811L1972 818M1950 845L1961 852L1972 845" stroke={GREY} strokeWidth="4" />
      <path d="M1977 815L1983 822V840L1977 847" stroke={GREY} strokeWidth="3.500" fill="#f8f9ff" />
      <path d="M1983 814L1990 822V840L1983 848" stroke={GREY} strokeWidth="3" />
    </svg>
    <span className="absolute left-[372px] top-[704px] text-[22.800px] leading-[32px] text-black">文字白板</span>
    <span className="absolute left-[360px] top-[750px] w-[138px] text-center font-['Noto_Sans'] text-[33px] leading-[46px] text-black">100</span>
    <TreePanel />
  </div>
);

const GamaWindow = () => (
  <div className="h-[1367px] w-[1272px] border-t-[7px] border-white bg-[#f0f0f0]">
    <div className="flex h-[48px] items-start text-[15px] text-black">
      <div className="ml-[5px] mt-[3px]"><Logo w={43} h={39} /></div>
      <div className="ml-[12px] mt-[6px] h-[31px] border-l-2 border-dotted border-[#bdbdbd]" />
      <div className="ml-[2px] mt-[2px] flex h-[40px] w-[51px] items-center justify-center border border-[#0078d7] bg-[#b3d7f3]">文件</div>
      <div className="mt-[2px] flex h-[40px] w-[51px] items-center justify-center">编辑</div>
      <div className="mt-[2px] flex h-[40px] w-[51px] items-center justify-center">帮助</div>
      <div className="ml-[159px] mt-[8px] flex h-[20px] w-[649px] items-center whitespace-nowrap text-[15.250px] leading-none">
        盈建科数字化智能设计软件<span className="tracking-[0.15px]"><Mono>{" Y-GAMA - "}</Mono></span>帮助文档制作
        <span className="tracking-[0.6px]"><Mono>.pgz*</Mono></span>
      </div>
      <div className="mt-[10px] h-[20px] w-[98px] leading-[20px]">窗口置顶</div>
      <div className="mt-[17px] h-[11px] w-[31px] border border-[#6d87a8] bg-gradient-to-b from-[#c6d8ea] to-[#e8f0f8] shadow-[0_2px_2px_#bbb]" />
      <div className="ml-[25px] mt-[9px] h-[27px] w-[31px] border border-[#1c82b8] bg-gradient-to-b from-[#d9d9d9] to-white to-60% shadow-[0_1px_2px_#aaa]"><div className="h-[5px] bg-[#3a9ddb]" /></div>
      <Svg w={32} h={31} vb="0 0 32 31" className="ml-[23px] mt-[8px]"><path d="M8 1L16 9L24 1L31 8L24 15.500L31 23L24 30L16 22L8 30L1 23L8 15.500L1 8Z" fill="url(#gRed)" stroke="#8d1515" strokeWidth="1.200" /></Svg>
    </div>
    <div className="flex h-[1312px]">
      <div className="ml-[4px]"><Sidebar /></div>
      <div className="ml-[5px] w-[1113px] border-l-2 border-t-2 border-[#6f6f6f]"><NodeCanvas /></div>
    </div>
  </div>
);

export default function App() {
  return (
    <div className="flex h-[1367px] w-[2553px] overflow-hidden bg-[#f0f0f0] font-['Noto_Sans_CJK_SC',sans-serif]">
      <Defs />
      <CadWindow />
      <GamaWindow />
    </div>
  );
}
